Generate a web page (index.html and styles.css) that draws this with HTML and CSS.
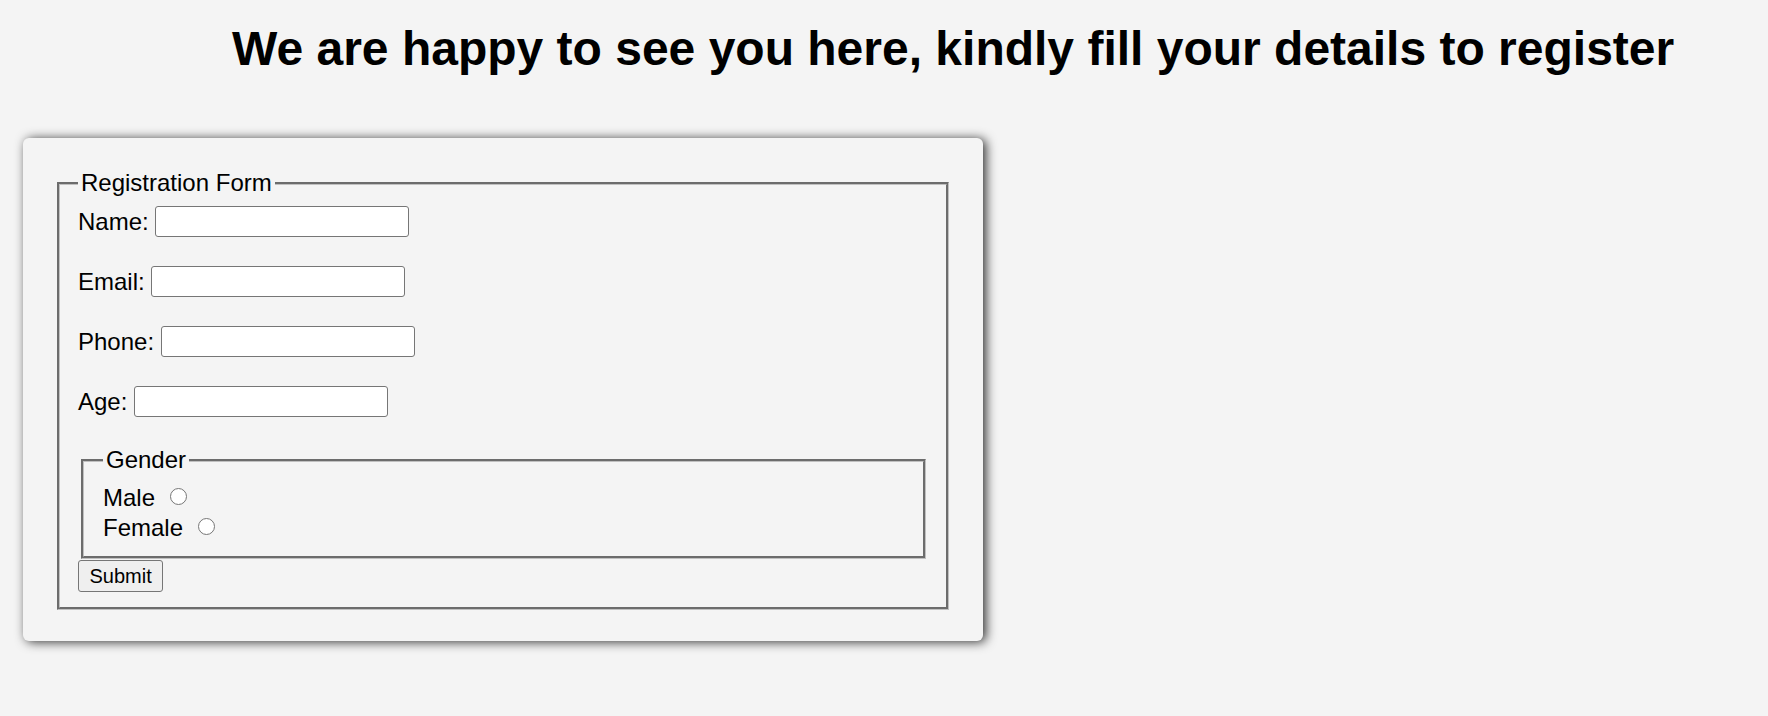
FILE: index.html
```html
<!DOCTYPE html>
<html lang="en">
<head>
<meta charset="utf-8">
<title>Registration</title>
<link rel="stylesheet" href="styles.css">
</head>
<body>
<h1 class="title">We are happy to see you here, kindly fill your details to register</h1>
<div class="card">
  <form class="form" action="#">
    <fieldset class="group">
      <legend class="legend">Registration Form</legend>
      <div class="fields">
        <div class="row"><label class="label" for="name">Name:</label><input class="input" id="name" type="text"></div>
        <div class="row"><label class="label" for="email">Email:</label><input class="input" id="email" type="email"></div>
        <div class="row"><label class="label" for="phone">Phone:</label><input class="input" id="phone" type="tel"></div>
        <div class="row"><label class="label" for="age">Age:</label><input class="input" id="age" type="number"></div>
        <fieldset class="group gender">
          <legend class="legend">Gender</legend>
          <div class="option"><label class="label" for="male">Male</label><input class="radio" type="radio" name="gender" id="male"></div>
          <div class="option"><label class="label" for="female">Female</label><input class="radio" type="radio" name="gender" id="female"></div>
        </fieldset>
      </div>
      <button class="submit" type="submit">Submit</button>
    </fieldset>
  </form>
</div>
</body>
</html>
```
FILE: styles.css
```css
html, body {
  margin: 0;
  padding: 0;
}

body {
  min-height: 100vh;
  padding-bottom: 1px;
  box-sizing: border-box;
  background: #f4f4f4;
  color: #000;
  font-family: "Liberation Sans", Arial, sans-serif;
  font-size: 24px;
}

.title {
  margin: 21px 0 0;
  padding-left: 232px;
  font-size: 48px;
  line-height: 56px;
  font-weight: bold;
  white-space: nowrap;
}

.card {
  box-sizing: border-box;
  width: 960px;
  margin: 61px 0 40px 23px;
  padding: 31px 34px 31px;
  background: #f4f4f4;
  border-radius: 6px;
  box-shadow: 3px 1px 11px rgba(0, 0, 0, 0.8);
}

.form {
  margin: 0;
}

.group {
  margin: 0;
  min-width: 0;
  padding: 9px 17px 15px 18px;
  border: 3px groove #c0c0c0;
}

.legend {
  padding: 0 3px;
  font-size: 24px;
  line-height: 28px;
}

.fields {
  display: flex;
  flex-direction: column;
  gap: 29px;
}

.row {
  display: flex;
  align-items: center;
  column-gap: 6.7px;
  height: 31px;
}

.label {
  font-size: 24px;
  line-height: normal;
}

.input {
  box-sizing: border-box;
  width: 254px;
  height: 31px;
  margin: 0;
  padding: 1px 3px;
  border: 1px solid #767676;
  border-radius: 3px;
  background: #fff;
  font-family: "Liberation Sans", Arial, sans-serif;
  font-size: 17px;
}

.gender {
  margin: 0 3px 0 3px;
  padding: 9px 17px 13px 19px;
}

.option {
  display: flex;
  align-items: center;
  height: 30px;
}

.radio {
  -webkit-appearance: none;
  appearance: none;
  box-sizing: border-box;
  width: 17px;
  height: 17px;
  margin: 0 0 3px 14.5px;
  border: 1px solid #767676;
  border-radius: 50%;
  background: #fff;
}

.submit {
  display: block;
  box-sizing: border-box;
  height: 32px;
  margin: 1px 0 0;
  padding: 0 10.5px;
  border: 1px solid #767676;
  border-radius: 3px;
  background: #efefef;
  color: #000;
  font-family: "Liberation Sans", Arial, sans-serif;
  font-size: 20px;
}
```
